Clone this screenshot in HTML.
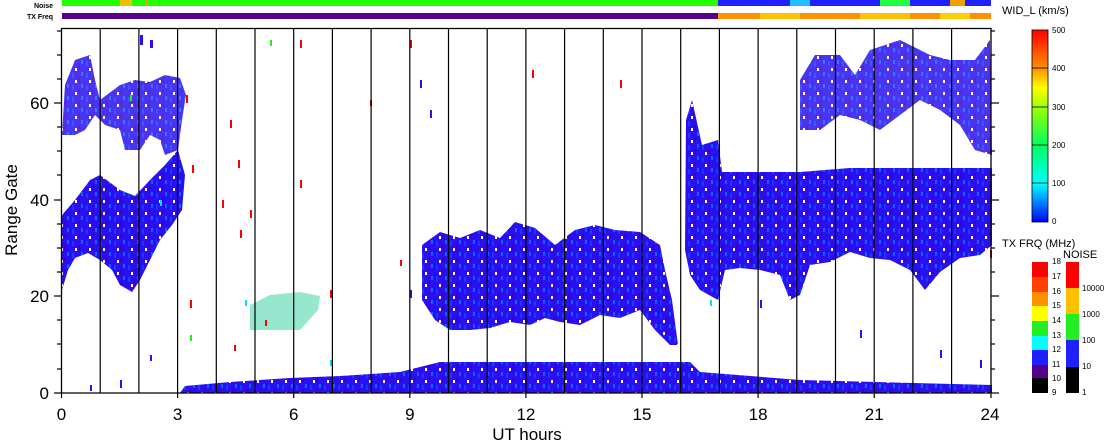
<!DOCTYPE html>
<html><head><meta charset="utf-8"><style>
html,body{margin:0;padding:0;background:#fff;}
body{width:1108px;height:441px;overflow:hidden;font-family:"Liberation Sans",sans-serif;}
</style></head><body>
<svg width="1108" height="441" viewBox="0 0 1108 441" xmlns="http://www.w3.org/2000/svg">
<defs>
<linearGradient id="wid" x1="0" y1="1" x2="0" y2="0">
<stop offset="0" stop-color="#0000ff"/><stop offset="0.2" stop-color="#00ffff"/>
<stop offset="0.4" stop-color="#00ff60"/><stop offset="0.6" stop-color="#a0ff00"/>
<stop offset="0.7" stop-color="#ffff00"/><stop offset="0.8" stop-color="#ff9000"/>
<stop offset="1" stop-color="#ff0000"/></linearGradient>
<pattern id="spk" width="14" height="12" patternUnits="userSpaceOnUse">
<rect width="14" height="12" fill="#2a10f0"/><rect x="2" y="1" width="2" height="5" fill="#1040ff"/><rect x="8" y="5" width="2" height="5" fill="#3a00d0"/>
<rect x="11" y="0" width="2" height="4" fill="#1060ff"/><rect x="5" y="8" width="2" height="3" fill="#fff"/>
</pattern>
</defs>
<rect x="62" y="0" width="656" height="6" fill="#22ff00"/>
<rect x="120" y="0" width="12" height="6" fill="#f0c000"/><rect x="146" y="0" width="2" height="6" fill="#f0a000"/>
<rect x="718" y="0" width="273" height="6" fill="#2020ff"/>
<rect x="790" y="0" width="20" height="6" fill="#20c0ff"/><rect x="880" y="0" width="30" height="6" fill="#20ff40"/><rect x="950" y="0" width="15" height="6" fill="#f0a000"/>
<rect x="62" y="13" width="656" height="6" fill="#550088"/>
<rect x="718" y="13" width="273" height="6" fill="#ff9000"/>
<rect x="760" y="13" width="40" height="6" fill="#ffc000"/><rect x="860" y="13" width="50" height="6" fill="#ffc000"/><rect x="940" y="13" width="30" height="6" fill="#ffd000"/>
<text x="53" y="8" font-size="7" text-anchor="end" font-weight="bold">Noise</text>
<text x="53" y="19" font-size="7" text-anchor="end" font-weight="bold">TX Freq</text>

<g fill="url(#spk)">
<path d="M62,290 L62,215 L75,200 L90,180 L100,175 L120,190 L135,196 L150,180 L165,165 L178,150 L185,175 L182,210 L172,225 L160,240 L150,260 L140,280 L132,292 L120,285 L112,270 L100,260 L88,253 L75,258 L68,270 Z"/>
<path d="M62,135 L65,85 L75,60 L90,55 L95,80 L100,100 L120,85 L135,80 L150,82 L165,75 L180,78 L186,95 L182,120 L178,150 L165,155 L160,140 L150,135 L140,150 L125,150 L120,130 L105,125 L95,115 L85,130 L75,135 Z" opacity="0.85"/>
<path d="M422,300 L422,245 L440,232 L460,238 L480,230 L500,238 L515,222 L535,228 L555,245 L575,230 L595,225 L615,230 L640,232 L660,245 L665,270 L672,300 L678,345 L670,345 L655,330 L640,310 L620,318 L600,315 L580,325 L560,322 L545,318 L530,325 L510,322 L490,328 L470,330 L450,330 L435,320 Z"/>
<path d="M180,393 L185,386 L230,382 L290,378 L340,376 L400,372 L440,362 L520,362 L600,362 L690,362 L700,372 L800,380 L992,385 L992,393 Z"/>
<path d="M685,250 L686,120 L692,100 L702,145 L718,140 L722,172 L800,172 L850,168 L992,168 L992,245 L980,255 L960,258 L940,272 L925,290 L910,270 L890,260 L870,258 L850,252 L830,262 L810,265 L800,295 L790,300 L780,275 L760,270 L740,268 L725,270 L718,300 L700,290 L690,275 Z"/>
<path d="M800,130 L800,80 L815,55 L840,55 L855,75 L870,50 L900,40 L930,55 L950,60 L975,60 L990,40 L992,155 L975,150 L960,125 L940,110 L920,100 L900,115 L880,130 L860,120 L840,115 L820,130 Z" opacity="0.85"/>
<path d="M250,330 L250,305 L270,295 L300,292 L320,296 L318,310 L300,330 L280,330 Z" fill="#30d0a0" opacity="0.5"/>
</g>
<g fill="#2a10f0">
<rect x="140" y="35" width="3" height="10"/><rect x="150" y="40" width="3" height="8"/><rect x="420" y="80" width="2" height="8"/><rect x="430" y="110" width="2" height="8"/>
<rect x="120" y="380" width="2" height="8"/><rect x="90" y="385" width="2" height="6"/><rect x="410" y="290" width="2" height="8"/><rect x="760" y="300" width="2" height="8"/>
<rect x="860" y="330" width="2" height="8"/><rect x="940" y="350" width="2" height="8"/><rect x="150" y="355" width="2" height="6"/><rect x="980" y="360" width="2" height="8"/>
</g>
<g fill="#ff0000">
<rect x="238" y="160" width="2" height="8"/><rect x="222" y="200" width="2" height="8"/><rect x="230" y="120" width="2" height="8"/><rect x="250" y="210" width="2" height="8"/>
<rect x="300" y="40" width="2" height="8"/><rect x="265" y="320" width="2" height="6"/><rect x="300" y="180" width="2" height="8"/><rect x="400" y="260" width="2" height="6"/>
<rect x="532" y="70" width="2" height="8"/><rect x="990" y="250" width="2" height="8"/><rect x="190" y="300" width="2" height="8"/><rect x="620" y="80" width="2" height="8"/>
<rect x="186" y="95" width="2" height="8"/><rect x="192" y="165" width="2" height="8"/><rect x="240" y="230" width="2" height="8"/><rect x="330" y="290" width="2" height="8"/>
<rect x="370" y="100" width="2" height="6"/><rect x="410" y="40" width="2" height="8"/><rect x="234" y="345" width="2" height="6"/>
</g>
<g fill="#00e0ff"><rect x="245" y="300" width="2" height="6"/><rect x="330" y="360" width="2" height="6"/><rect x="710" y="300" width="2" height="6"/><rect x="160" y="200" width="2" height="6"/></g>
<g fill="#22ee22"><rect x="130" y="95" width="2" height="6"/><rect x="270" y="40" width="2" height="6"/><rect x="190" y="335" width="2" height="6"/></g>

<g stroke="#000" stroke-width="1.3" fill="none">
<line x1="61.5" y1="28" x2="61.5" y2="393"/>
<line x1="991" y1="28" x2="991" y2="393"/>
<line x1="61.5" y1="28.5" x2="991" y2="28.5"/>
<line x1="61.5" y1="393" x2="991" y2="393"/>
</g>
<g stroke="#000" stroke-width="1.2">
<line x1="100.2" y1="28" x2="100.2" y2="393"/><line x1="138.9" y1="28" x2="138.9" y2="393"/><line x1="177.6" y1="28" x2="177.6" y2="398"/>
<line x1="216.3" y1="28" x2="216.3" y2="393"/><line x1="255" y1="28" x2="255" y2="393"/><line x1="293.7" y1="28" x2="293.7" y2="398"/>
<line x1="332.4" y1="28" x2="332.4" y2="393"/><line x1="371.1" y1="28" x2="371.1" y2="393"/><line x1="409.8" y1="28" x2="409.8" y2="398"/>
<line x1="448.5" y1="28" x2="448.5" y2="393"/><line x1="487.2" y1="28" x2="487.2" y2="393"/><line x1="525.9" y1="28" x2="525.9" y2="398"/>
<line x1="564.6" y1="28" x2="564.6" y2="393"/><line x1="603.3" y1="28" x2="603.3" y2="393"/><line x1="642" y1="28" x2="642" y2="398"/>
<line x1="680.7" y1="28" x2="680.7" y2="393"/><line x1="719.4" y1="28" x2="719.4" y2="393"/><line x1="758.1" y1="28" x2="758.1" y2="398"/>
<line x1="796.8" y1="28" x2="796.8" y2="393"/><line x1="835.5" y1="28" x2="835.5" y2="393"/><line x1="874.2" y1="28" x2="874.2" y2="398"/>
<line x1="912.9" y1="28" x2="912.9" y2="393"/><line x1="951.6" y1="28" x2="951.6" y2="393"/>
<line x1="61.5" y1="393" x2="61.5" y2="398"/><line x1="991" y1="393" x2="991" y2="398"/>
<line x1="54" y1="393" x2="61.5" y2="393"/><line x1="54" y1="296" x2="61.5" y2="296"/><line x1="54" y1="200" x2="61.5" y2="200"/><line x1="54" y1="103" x2="61.5" y2="103"/>
<line x1="57" y1="369" x2="61.5" y2="369"/><line x1="57" y1="344" x2="61.5" y2="344"/><line x1="57" y1="320" x2="61.5" y2="320"/>
<line x1="57" y1="272" x2="61.5" y2="272"/><line x1="57" y1="248" x2="61.5" y2="248"/><line x1="57" y1="224" x2="61.5" y2="224"/>
<line x1="57" y1="175" x2="61.5" y2="175"/><line x1="57" y1="151" x2="61.5" y2="151"/><line x1="57" y1="127" x2="61.5" y2="127"/>
<line x1="57" y1="79" x2="61.5" y2="79"/><line x1="57" y1="55" x2="61.5" y2="55"/><line x1="57" y1="31" x2="61.5" y2="31"/>
<line x1="991" y1="393" x2="999" y2="393"/><line x1="991" y1="296" x2="999" y2="296"/><line x1="991" y1="200" x2="999" y2="200"/><line x1="991" y1="103" x2="999" y2="103"/>
<line x1="991" y1="369" x2="995" y2="369"/><line x1="991" y1="344" x2="995" y2="344"/><line x1="991" y1="320" x2="995" y2="320"/><line x1="991" y1="272" x2="995" y2="272"/><line x1="991" y1="248" x2="995" y2="248"/><line x1="991" y1="224" x2="995" y2="224"/><line x1="991" y1="175" x2="995" y2="175"/><line x1="991" y1="151" x2="995" y2="151"/><line x1="991" y1="127" x2="995" y2="127"/><line x1="991" y1="79" x2="995" y2="79"/><line x1="991" y1="55" x2="995" y2="55"/><line x1="991" y1="31" x2="995" y2="31"/>
</g>
<g font-size="17" fill="#000" text-anchor="middle">
<text x="61.5" y="420">0</text><text x="177.6" y="420">3</text><text x="293.7" y="420">6</text><text x="409.8" y="420">9</text>
<text x="525.9" y="420">12</text><text x="642" y="420">15</text><text x="758.1" y="420">18</text><text x="874.2" y="420">21</text><text x="990" y="420">24</text>
<text x="527" y="440">UT hours</text>
</g>
<g font-size="17" fill="#000" text-anchor="end">
<text x="49" y="399">0</text><text x="49" y="302">20</text><text x="49" y="206">40</text><text x="49" y="109">60</text>
</g>
<text x="0" y="0" font-size="17" text-anchor="middle" transform="translate(17,210) rotate(-90)">Range Gate</text>

<text x="1002" y="14" font-size="11">WID_L (km/s)</text>
<rect x="1032" y="30" width="16" height="192" fill="url(#wid)" stroke="#000" stroke-width="0.8"/>
<g stroke="#000" stroke-width="0.8"><line x1="1032" y1="68" x2="1048" y2="68"/><line x1="1032" y1="107" x2="1048" y2="107"/><line x1="1032" y1="145" x2="1048" y2="145"/><line x1="1032" y1="183" x2="1048" y2="183"/></g>
<g font-size="8"><text x="1052" y="33">500</text><text x="1052" y="71">400</text><text x="1052" y="110">300</text><text x="1052" y="148">200</text><text x="1052" y="186">100</text><text x="1052" y="224">0</text></g>

<text x="1002" y="247" font-size="11">TX FRQ (MHz)</text>
<text x="1063" y="258" font-size="11">NOISE</text>
<g stroke="none">
<rect x="1032" y="262" width="16" height="15" fill="#ff0000"/><rect x="1032" y="277" width="16" height="15" fill="#ff4000"/>
<rect x="1032" y="292" width="16" height="14" fill="#ff9000"/><rect x="1032" y="306" width="16" height="15" fill="#ffff00"/>
<rect x="1032" y="321" width="16" height="15" fill="#22ee22"/><rect x="1032" y="336" width="16" height="14" fill="#00ffff"/>
<rect x="1032" y="350" width="16" height="15" fill="#2020ff"/><rect x="1032" y="365" width="16" height="13" fill="#550088"/>
<rect x="1032" y="378" width="16" height="15" fill="#000"/>
<rect x="1066" y="262" width="13" height="26" fill="#ff0000"/><rect x="1066" y="288" width="13" height="26" fill="#ffc000"/>
<rect x="1066" y="314" width="13" height="26" fill="#22ee22"/><rect x="1066" y="340" width="13" height="27" fill="#2020ff"/>
<rect x="1066" y="367" width="13" height="26" fill="#000"/>
</g>
<g font-size="8"><text x="1052" y="264">18</text><text x="1052" y="279">17</text><text x="1052" y="294">16</text><text x="1052" y="308">15</text><text x="1052" y="323">14</text><text x="1052" y="338">13</text><text x="1052" y="352">12</text><text x="1052" y="367">11</text><text x="1052" y="381">10</text><text x="1052" y="395">9</text>
<text x="1082" y="291">10000</text><text x="1082" y="317">1000</text><text x="1082" y="343">100</text><text x="1082" y="369">10</text><text x="1082" y="395">1</text></g>
</svg>
</body></html>
